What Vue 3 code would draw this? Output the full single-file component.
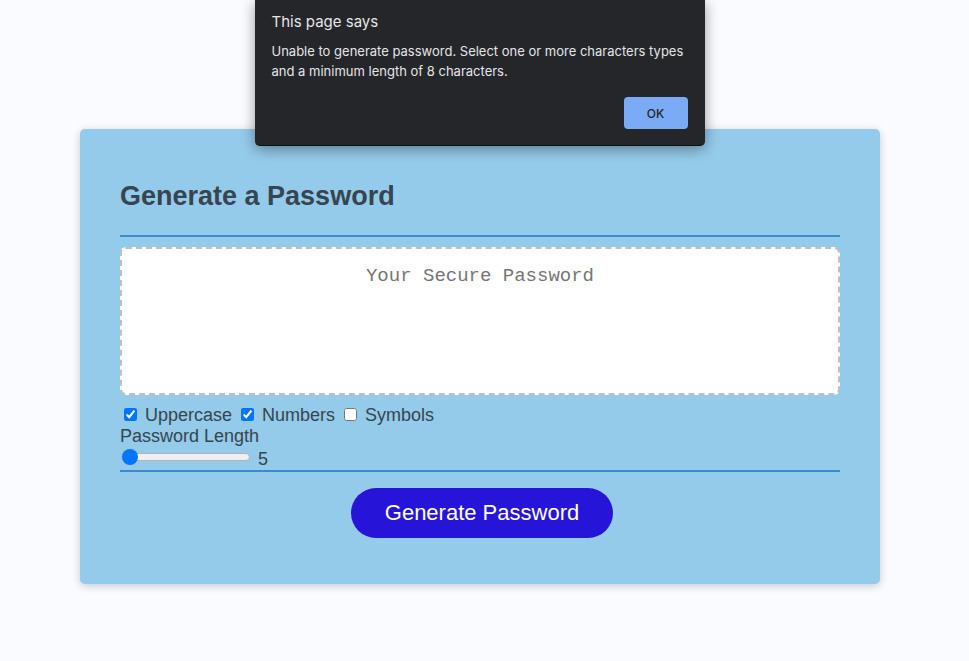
<script setup>
import { ref } from 'vue'

const dialogOpen = ref(true)
const password = ref('')
const length = ref(5)
const options = ref([
  { id: 'uppercase', label: 'Uppercase', checked: true },
  { id: 'numbers', label: 'Numbers', checked: true },
  { id: 'symbols', label: 'Symbols', checked: false },
])

const pools = {
  uppercase: 'ABCDEFGHIJKLMNOPQRSTUVWXYZ',
  numbers: '0123456789',
  symbols: '!@#$%^&*()',
}

function generate() {
  const chars = options.value.filter((o) => o.checked).map((o) => pools[o.id]).join('')
  if (!chars || length.value < 8) {
    dialogOpen.value = true
    return
  }
  password.value = Array.from(
    { length: length.value },
    () => chars[Math.floor(Math.random() * chars.length)],
  ).join('')
}
</script>

<template>
  <div class="page">
    <main class="card">
      <header class="card-header">
        <h2>Generate a Password</h2>
      </header>
      <form class="card-body" @submit.prevent="generate">
        <textarea
          v-model="password"
          class="password"
          readonly
          placeholder="Your Secure Password"
          aria-label="Your Secure Password"
        ></textarea>
        <div class="options">
          <div v-for="o in options" :key="o.id" class="option">
            <input :id="o.id" v-model="o.checked" type="checkbox" />
            <label :for="o.id">{{ o.label }}</label>
          </div>
        </div>
        <label class="length-label" for="length">Password Length</label>
        <div class="length-row">
          <input
            id="length"
            v-model.number="length"
            class="slider"
            type="range"
            min="5"
            max="128"
          />
          <output for="length">{{ length }}</output>
        </div>
        <div class="card-footer">
          <button class="generate" type="submit">Generate Password</button>
        </div>
      </form>
    </main>

    <div v-if="dialogOpen" class="dialog" role="alertdialog" aria-labelledby="dialog-title">
      <h1 id="dialog-title">This page says</h1>
      <p>
        Unable to generate password. Select one or more characters types and a minimum length of 8
        characters.
      </p>
      <button class="ok" type="button" @click="dialogOpen = false">OK</button>
    </div>
  </div>
</template>

<style>
body {
  background: #f9fbff;
}
</style>

<style scoped>
.page {
  box-sizing: border-box;
  min-height: 100vh;
  padding: 129px 89px 40px 80px;
  color: #36454f;
  font-family: "Liberation Sans", Arial, sans-serif;
  font-size: 18px;
  line-height: 21px;
}

.card {
  max-width: 800px;
  box-sizing: border-box;
  margin: 0 auto;
  padding: 32px 40px 46px;
  border-radius: 5px;
  background: #94caea;
  box-shadow: 0 2px 8px rgba(0, 0, 0, 0.2);
}

.card-header {
  padding: 18px 0 22px;
  border-bottom: 2px solid #3c8acb;
}

h2 {
  margin: 0;
  font-size: 27px;
  line-height: 34px;
}

.card-body {
  display: flex;
  flex-direction: column;
  padding-top: 10px;
}

.password {
  box-sizing: border-box;
  width: 100%;
  height: 148px;
  margin: 0;
  padding: 16px;
  resize: none;
  border: 2px dashed #c0c0c0;
  border-radius: 6px;
  outline: none;
  background: #fff;
  color: #36454f;
  font-family: "Liberation Mono", "Courier New", monospace;
  font-size: 19px;
  line-height: 22px;
  text-align: center;
}

.password::placeholder {
  color: #757575;
}

.options {
  display: flex;
  flex-wrap: wrap;
  gap: 5px;
  padding-top: 10px;
}

.option {
  display: flex;
  align-items: center;
  gap: 5px;
}

.option input {
  width: 13px;
  height: 13px;
  margin: 0 3px 2px 4px;
}

.length-row {
  display: flex;
  align-items: flex-start;
  gap: 8px;
  height: 23px;
}

.slider {
  appearance: none;
  width: 129px;
  height: 16px;
  margin: 2px 0 0 1px;
  background: transparent;
}

.slider::-webkit-slider-runnable-track {
  box-sizing: border-box;
  height: 8px;
  border: 1px solid #b2b2b2;
  border-radius: 4px;
  background: #efefef;
}

.slider::-webkit-slider-thumb {
  appearance: none;
  width: 16px;
  height: 16px;
  margin-top: -5px;
  border-radius: 50%;
  background: #0075ff;
}

.length-row output {
  padding-top: 2px;
}

.card-footer {
  display: flex;
  justify-content: center;
  padding: 16px 0 0 4px;
  border-top: 2px solid #3c8acb;
}

.generate {
  height: 50px;
  padding: 0 34px;
  border: 0;
  border-radius: 25px;
  background: #2614d8;
  color: #fff;
  font-family: inherit;
  font-size: 22px;
}

.dialog {
  position: absolute;
  top: 0;
  left: 50%;
  display: flex;
  flex-direction: column;
  box-sizing: border-box;
  width: 450px;
  max-width: 100%;
  margin-left: -5px;
  padding: 12px 17px 16px;
  transform: translateX(-50%);
  border-bottom: 1px solid #101114;
  border-radius: 0 0 5px 5px;
  background: #25262a;
  box-shadow: 0 3px 14px rgba(0, 0, 0, 0.4);
  color: #e4e5e8;
  font-family: Inter, "Liberation Sans", sans-serif;
}

.dialog h1 {
  margin: 0 0 9px;
  font-size: 15px;
  font-weight: 400;
  line-height: 20px;
}

.dialog p {
  margin: 0 0 16px;
  font-size: 13px;
  font-weight: 400;
  line-height: 20px;
}

.ok {
  align-self: flex-end;
  width: 64px;
  height: 32px;
  padding: 0;
  border: 0;
  border-radius: 4px;
  background: #7aabf4;
  color: #25262a;
  font-family: inherit;
  font-size: 12px;
  font-weight: 500;
}
</style>
